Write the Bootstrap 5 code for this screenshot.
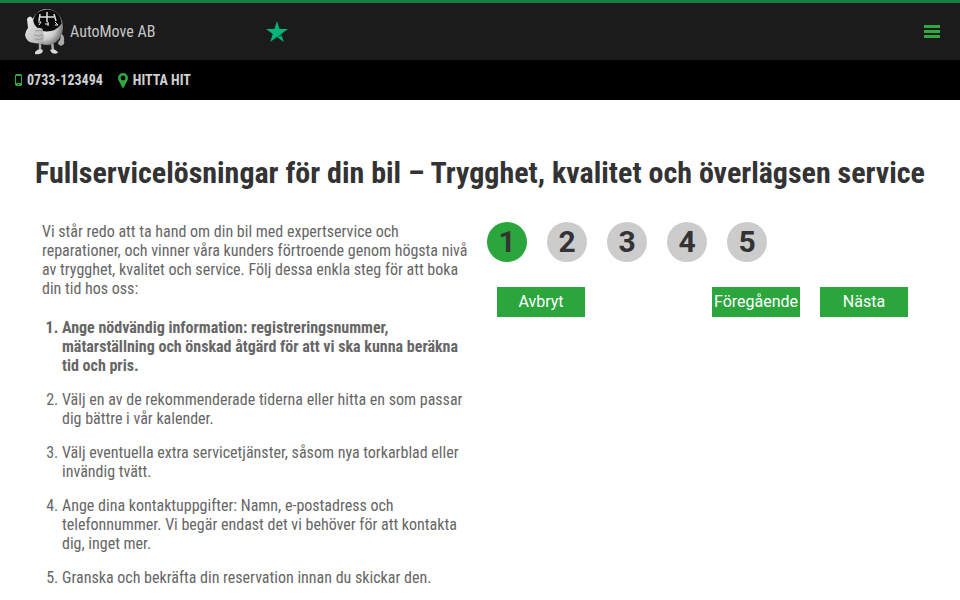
<!DOCTYPE html>
<html lang="sv">
<head>
<meta charset="utf-8">
<meta name="viewport" content="width=device-width, initial-scale=1">
<title>AutoMove AB</title>
<link href="https://cdn.jsdelivr.net/npm/bootstrap@5.3.0/dist/css/bootstrap.min.css" rel="stylesheet">
<style>
  body { font-family: "Roboto Condensed", "Liberation Sans Narrow", sans-serif; font-size: 16px; line-height: 19px; color: #666; background: #fff; }
  .topbar { height: 60px; border-top: 3px solid #158142; background: #1b1b1b; padding: 0 20px 0 25px; }
  .brand-link { color: #c4c4c4; gap: 5px; width: 241px; }
  .menu-btn { line-height: 0; }
  .contactbar { height: 40px; background: #000; padding: 0 15px; gap: 15px; font-size: 14px; font-weight: 700; }
  .contactbar a { color: #d0d0d0; gap: 5px; }
  .content { padding: 55px 32px 0; }
  .title { font-size: 30px; line-height: 36px; font-weight: 700; color: #333; margin-bottom: 31px; }
  .intro { padding: 0 10px; }
  .intro p { margin-bottom: 20px; }
  .steps-list { padding-left: 20px; }
  .steps-list li { margin-bottom: 15px; }
  .wizard { padding: 0 7px; font-family: Roboto, sans-serif; }
  .steps { gap: 20px; margin-bottom: 25px; }
  .step { width: 40px; height: 40px; background: #ccc; color: #333; font-size: 30px; line-height: 40px; font-weight: 700; }
  .step-active { background: #2aa63c; }
  .actions { padding: 0 13px 0 10px; gap: 20px; }
  .action { flex: 0 0 88px; height: 30px; padding: 0; border: 0; border-radius: 0; background: #2aa63c; color: #fff; font-size: 16px; line-height: 30px; }
  .action:hover { background: #218a30; color: #fff; }
</style>
<script src="https://cdn.jsdelivr.net/npm/bootstrap@5.3.0/dist/js/bootstrap.bundle.min.js" defer></script>
</head>
<body>
<header>
  <div class="topbar d-flex align-items-center">
    <a class="brand-link d-flex align-items-center text-decoration-none" href="#">
      <svg width="40" height="48" viewBox="0 1 40 48" aria-hidden="true">
        <defs>
          <radialGradient id="ball" cx=".4" cy=".45" r=".6"><stop offset="0" stop-color="#fff"/><stop offset=".65" stop-color="#ccc"/><stop offset="1" stop-color="#777"/></radialGradient>
          <linearGradient id="hand" x2="1" y2="1"><stop offset="0" stop-color="#f2f2f2"/><stop offset="1" stop-color="#aaa"/></linearGradient>
        </defs>
        <path d="M15 35v8M27 35l1 8M34 27q4 1 4 6" fill="none" stroke="#aaa" stroke-width="2.5"/>
        <path d="M10 45q3-4 8-2l-1 3q-4 2-7 1zM25 43q4-2 8 2-1 3-6 1z" fill="#d8d8d8"/>
        <path d="M36 28q4 4 3 9l-3 2-3-2q0-3 2-4z" fill="#aaa"/>
        <ellipse cx="22" cy="20" rx="16" ry="18" fill="url(#ball)"/>
        <path d="M8 14Q10 3 22 2.500q13 .5 14.500 14-5 8-15 8Q11 24 8 14z" fill="#0c0c0c"/>
        <path d="M15 7l-1 7M22 5v10M29 7l2 7M15 10h14" fill="none" stroke="#ddd" stroke-width="1.500"/>
        <path d="M13 15h3l-2 3M20 17h4M23 15v4M30 15l3 3h-3" fill="none" stroke="#eee" stroke-width="1"/>
        <path d="M2 12q3-5 6 0l1 9q8-1 9 2l1 8q-2 7-10 5-8-1-9-8 1-5 3-7z" fill="url(#hand)"/>
        <path d="M10 24q5-1 8 0M9 28q5 2 9 0M10 32q4 2 8-1" fill="none" stroke="#999" stroke-width="1"/>
      </svg>
      <span>AutoMove AB</span>
    </a>
    <svg width="22" height="22" viewBox="0 0 22 22" aria-hidden="true"><path d="M11 0l2.600 8H22l-6.800 5L17.800 21 11 16 4.200 21l2.600-8L0 8h8.400z" fill="#00b67a"/><path d="M11 16l4.200-3 .8 2.300z" fill="#005128"/></svg>
    <button class="menu-btn btn p-0 border-0 ms-auto" type="button" aria-label="Meny">
      <svg width="16" height="14" viewBox="0 0 16 14" aria-hidden="true"><path d="M0 0h16v3H0zM0 5h16v3H0zM0 10h16v3H0z" fill="#2fa840"/></svg>
    </button>
  </div>
  <nav class="contactbar d-flex align-items-center" aria-label="Kontakt">
    <a class="d-flex align-items-center text-decoration-none" href="tel:0733123494">
      <svg width="7" height="12" viewBox="0 0 7 12" aria-hidden="true"><path fill-rule="evenodd" d="M1 0h5l1 1v10l-1 1H1l-1-1V1zM1 2v7h5V2zM3 10v1h1v-1z" fill="#2fa840"/></svg>
      <span>0733-123494</span>
    </a>
    <a class="d-flex align-items-center text-decoration-none" href="#">
      <svg width="10" height="15" viewBox="0 0 10 15" aria-hidden="true"><path fill-rule="evenodd" d="M5 0a5 5 0 0 1 5 5c0 2-1 3-2 5l-2 4q-1 2-2 0L2 10C1 8 0 7 0 5a5 5 0 0 1 5-5zM5 2.600a2.400 2.400 0 1 0 0 4.800 2.400 2.400 0 0 0 0-4.800z" fill="#2fa840"/></svg>
      <span>HITTA HIT</span>
    </a>
  </nav>
</header>
<main class="content">
  <h1 class="title text-center">Fullservicelösningar för din bil – Trygghet, kvalitet och överlägsen service</h1>
  <div class="row g-0">
    <section class="intro col-6">
      <p>Vi står redo att ta hand om din bil med expertservice och reparationer, och vinner våra kunders förtroende genom högsta nivå av trygghet, kvalitet och service. Följ dessa enkla steg för att boka din tid hos oss:</p>
      <ol class="steps-list mb-0">
        <li class="fw-bold">Ange nödvändig information: registreringsnummer, mätarställning och önskad åtgärd för att vi ska kunna beräkna tid och pris.</li>
        <li>Välj en av de rekommenderade tiderna eller hitta en som passar dig bättre i vår kalender.</li>
        <li>Välj eventuella extra servicetjänster, såsom nya torkarblad eller invändig tvätt.</li>
        <li>Ange dina kontaktuppgifter: Namn, e-postadress och telefonnummer. Vi begär endast det vi behöver för att kontakta dig, inget mer.</li>
        <li>Granska och bekräfta din reservation innan du skickar den.</li>
      </ol>
    </section>
    <section class="wizard col-6" aria-label="Boka tid">
      <div class="steps d-flex">
        <span class="step step-active rounded-circle text-center" aria-current="step">1</span>
        <span class="step rounded-circle text-center">2</span>
        <span class="step rounded-circle text-center">3</span>
        <span class="step rounded-circle text-center">4</span>
        <span class="step rounded-circle text-center">5</span>
      </div>
      <div class="actions d-flex">
        <button class="action btn me-auto" type="button">Avbryt</button>
        <button class="action btn" type="button">Föregående</button>
        <button class="action btn" type="button">Nästa</button>
      </div>
    </section>
  </div>
</main>
</body>
</html>
